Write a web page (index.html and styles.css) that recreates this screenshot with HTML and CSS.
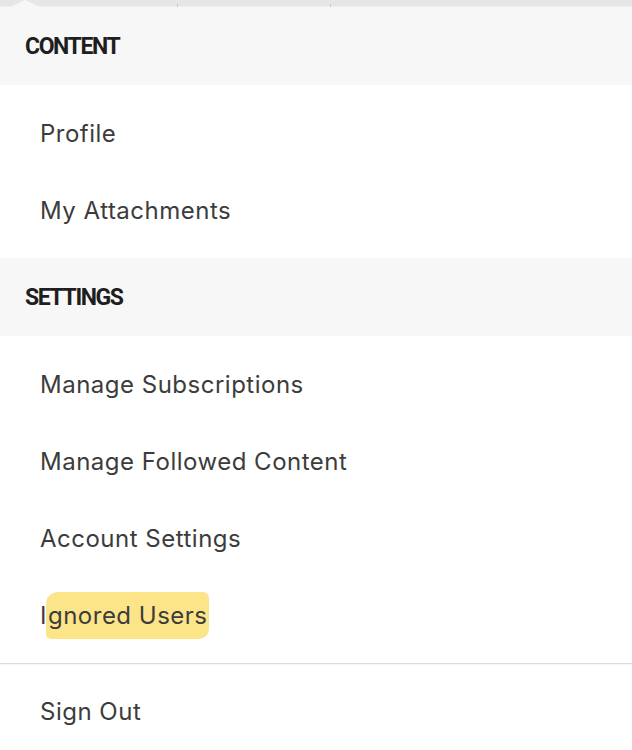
FILE: index.html
```html
<!DOCTYPE html>
<html>
<head>
<meta charset="utf-8">
<link rel="stylesheet" href="styles.css">
</head>
<body>
<div class="menu">
  <div class="topbar"><span class="tick t1"></span><span class="tick t2"></span><span class="notch"></span></div>
  <div class="section-head">CONTENT</div>
  <ul class="list">
    <li class="item">Profile</li>
    <li class="item">My Attachments</li>
  </ul>
  <div class="section-head">SETTINGS</div>
  <ul class="list">
    <li class="item">Manage Subscriptions</li>
    <li class="item">Manage Followed Content</li>
    <li class="item">Account Settings</li>
    <li class="item">I<span class="marker">gnored Users</span></li>
  </ul>
  <div class="divider"></div>
  <ul class="list last">
    <li class="item">Sign Out</li>
  </ul>
</div>
</body>
</html>
```
FILE: styles.css
```css
html, body {
  margin: 0;
  padding: 0;
  background: #ffffff;
}
.menu {
  width: 632px;
  height: 750px;
  overflow: hidden;
  font-family: Inter, "Noto Sans", sans-serif;
}
.topbar {
  position: relative;
  height: 7px;
  background: #e6e6e8;
  border-bottom: 1px solid #eeeeee;
  box-sizing: border-box;
}
.notch {
  position: absolute;
  left: 10px;
  top: 0;
  width: 0;
  height: 0;
  border-left: 15px solid transparent;
  border-right: 15px solid transparent;
  border-bottom: 7px solid #f7f7f7;
}
.tick {
  position: absolute;
  top: 4px;
  width: 1px;
  height: 3px;
  background: #c8c8c8;
}
.t1 { left: 177px; }
.t2 { left: 330px; }
.section-head {
  height: 78px;
  background: #f7f7f7;
  display: flex;
  align-items: center;
  padding-left: 25px;
  font-family: Roboto, "Liberation Sans", sans-serif;
  font-weight: 700;
  font-size: 23px;
  letter-spacing: -1.4px;
  color: #1e1e1e;
}
.list {
  list-style: none;
  margin: 0;
  padding: 10px 0 9px;
}
.item {
  height: 77px;
  display: flex;
  align-items: center;
  padding-left: 40px;
  font-size: 24px;
  color: #3c3c3c;
  letter-spacing: 0.5px;
}
.marker {
  background: rgba(252, 224, 115, 0.85);
  padding: 9px 1px 9px 2px;
  margin-left: -1px;
  border-radius: 12px 6px 10px 5px;
}
.divider {
  height: 1px;
  background: #dcdcdc;
  box-shadow: 0 1px 1px rgba(0,0,0,0.05);
}
.list.last {
  padding-top: 9px;
}
```
